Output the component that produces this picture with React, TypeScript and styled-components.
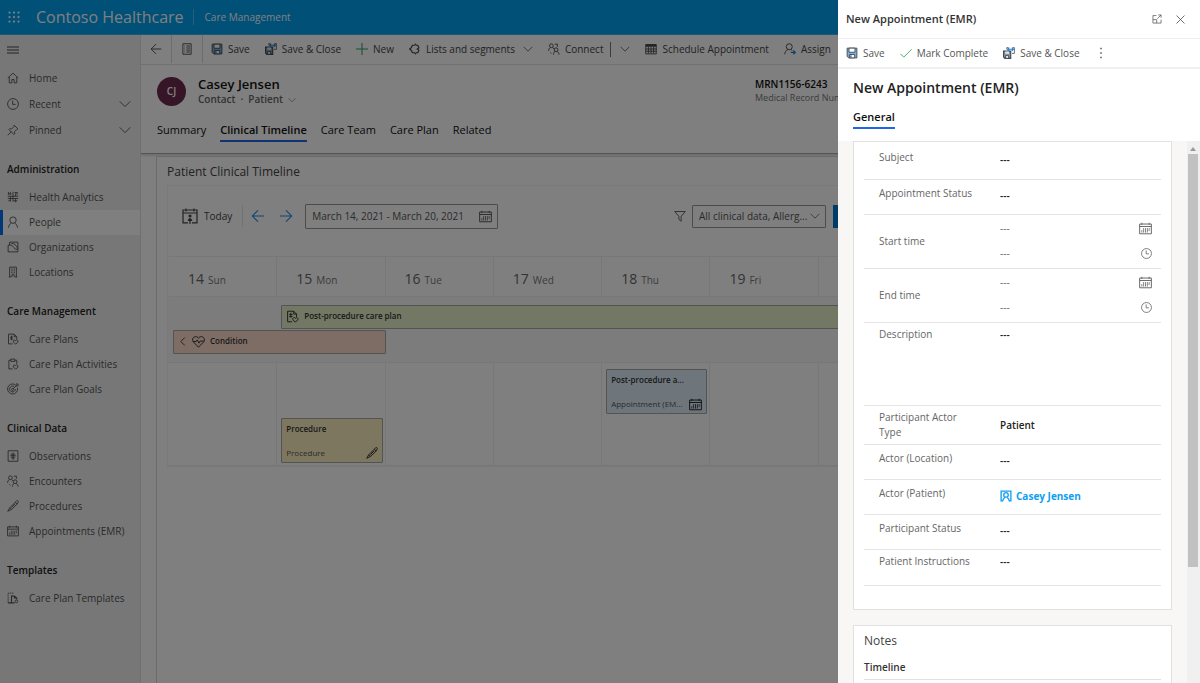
import React from 'react';
import styled, { createGlobalStyle, css } from 'styled-components';

const GlobalStyle = createGlobalStyle`
  * { box-sizing: border-box; }
  body {
    margin: 0;
    background: #ffffff;
    color: #333333;
    font-family: 'Open Sans', 'Noto Sans', sans-serif;
    font-size: 10px;
    line-height: 16px;
  }
  button, input, select, textarea { font: inherit; color: inherit; }
  h1, h2, h3, p, ul { margin: 0; padding: 0; font-size: inherit; font-weight: 400; }
  a { color: inherit; text-decoration: none; }
`;

/* ---------- icons ---------- */

const Svg = styled.svg<{ $size: number }>`
  width: ${(p) => p.$size}px;
  height: ${(p) => p.$size}px;
  flex: none;
  display: block;
  fill: none;
  stroke: currentColor;
  stroke-width: 1.2;
`;

const shapes: Record<string, React.ReactNode> = {
  menu: <path d="M0 4h16M0 8h16M0 12h16" />,
  home: <path d="M1 8l7-6.500L15 8M3 6.500v8h3.500V10h3v4.500H13v-8" />,
  clock: (
    <>
      <circle cx="8" cy="8" r="7.200" />
      <path d="M7.500 3.500v5h4" />
    </>
  ),
  pin: <path d="M1 15l5-5M9.500 1.500l5 5-1.500.800-3 3 .200 2.700-1 1-6.700-6.700 1-1 2.700.200 3-3z" />,
  chevronDown: <path d="M1 4.500L8 11.500l7-7" />,
  chevronLeft: <path d="M12 1L5 8l7 7" strokeWidth="1.600" />,
  analytics: (
    <>
      <path d="M1 7h14M1 10h14M4.500 7v7M8 1v13M11.500 3v4M11.500 10v5" />
      <path d="M1 4h5M2 1.500v3M4.500 1.500v3M10 2h4M13.500 2v3M2 13h3M8.500 13h5" />
    </>
  ),
  person: (
    <>
      <circle cx="8" cy="5.500" r="4.300" />
      <path d="M2 15.500c.300-3.500 2-5 3.800-6M14 15.500c-.300-3.500-2-5-3.800-6" />
    </>
  ),
  organization: (
    <>
      <path d="M1.500 5.500v9h13V1.500h-11v4M1.500 5.500h4.500l3 3 2 2.500h3.500" />
      <path d="M6 3.500h3l3 2.500 2.500 4" />
    </>
  ),
  building: (
    <>
      <path d="M3.500 15V1.500h9V15M2.500 14.500h3.500M10 14.500h3.500M6.500 14.500v-3h3v3" />
      <path d="M5.500 4h2M8.700 4h2M5.500 6.500h2M8.700 6.500h2M5.500 9h2M8.700 9h2" />
    </>
  ),
  carePlan: (
    <>
      <path d="M7.500 14.500H2v-13h7.500L13 5v3.500" />
      <path d="M9.500 1.500V5H13M4 5.500h4M4 8h4M6 3.500v6" />
      <path d="M11.500 15l-3-3a1.700 1.700 0 0 1 3-1.800 1.700 1.700 0 0 1 3 1.800z" />
    </>
  ),
  activities: (
    <>
      <path d="M7.500 14.500h-5V3h2.500M10.500 3H13v5M5 1.500h5.500v3H5z" />
      <path d="M11.500 15l-3-3a1.700 1.700 0 0 1 3-1.800 1.700 1.700 0 0 1 3 1.800z" />
    </>
  ),
  goals: (
    <>
      <path d="M10.500 2A6.700 6.700 0 1 0 14 6.500" />
      <path d="M9.500 4.700A3.900 3.900 0 1 0 11.300 8" />
      <circle cx="7.500" cy="8.500" r="1.300" />
      <path d="M8 8l4-4M12 4V1.500l2.500-.500M12 4h2.500l.5-2.500" />
    </>
  ),
  observations: (
    <>
      <path d="M1.500 1h13v14h-13z" />
      <path d="M8 3.500v9M5 5.500h6M4.500 7.500h7M5 9.500h6M6.500 11.500h3" />
    </>
  ),
  encounters: (
    <>
      <circle cx="4.500" cy="3.700" r="2.500" />
      <path d="M.800 10.500c0-2.500 1.200-3.800 2.400-4.400M8 8c-.300-1-1-1.600-1.800-2" />
      <circle cx="10.800" cy="9" r="2.500" />
      <path d="M7.200 15.500c.200-2.500 1.200-3.700 2.400-4.400M14.700 15.500c-.200-2.500-1.400-3.700-2.600-4.400" />
      <path d="M9 1.500h3.500V5M3 12.500l1.500 1.500" />
    </>
  ),
  scalpel: (
    <>
      <path d="M1 15l2.500-4.500L11 3l2.500 2.500-7.500 7z" />
      <path d="M11 3l2-2.200c1.500-.500 2.500.700 1.900 2L13.500 5.500M4 10.500l2 2M6 10l5-5" />
    </>
  ),
  calendar: (
    <>
      <path d="M.800 2.500h14.400v12H.800zM.800 5.500h14.400M3.500 1v2.500M12.500 1v2.500" />
      <path d="M3.500 10v3M5.700 7.500V13M8 7.500V13M10.300 7.500V13M12.500 7.500V11" strokeWidth="1" />
    </>
  ),
  template: (
    <>
      <path d="M1.500 14.500v-13h8" strokeDasharray="2 1" />
      <path d="M1.500 14.500h4M10 5.500H6v9h4M10 5.500L13 8v2M10 5.500V8h3" strokeWidth="1.500" />
      <circle cx="12.500" cy="12.500" r="1.800" />
    </>
  ),
  back: <path d="M15 8H1.500M8 1.500L1.500 8 8 14.500" />,
  forward: <path d="M1 8h13.500M8 1.500L14.500 8 8 14.500" />,
  form: (
    <>
      <path d="M2.500 1h11v14h-11z" />
      <path d="M4.500 4h1M7 4h5M4.500 6.700h1M7 6.700h5M4.500 9.400h1M7 9.400h5M4.500 12h1M7 12h5" />
    </>
  ),
  save: (
    <>
      <path d="M1.500 1.500h13v13h-11l-2-2z" fill="#7fb2dc" stroke="#3f4750" />
      <path d="M4 1.500h8v5.500H4z" fill="#ffffff" stroke="#3f4750" />
      <path d="M4.500 10h7v4.500h-7z" fill="#ffffff" stroke="#3f4750" />
      <path d="M6.500 11v3" stroke="#3f4750" strokeWidth="1.6" />
    </>
  ),
  saveClose: (
    <>
      <path d="M.800 5.500h9.500v9.700H2.500L.800 13.500z" fill="#8a96a0" stroke="#3f4750" strokeWidth="1.500" />
      <path d="M3 6h5v3H3z" fill="#dfe6ec" stroke="none" />
      <path d="M3.500 11.500h4V15h-4z" fill="#ffffff" stroke="#3f4750" />
      <path d="M5 3V.800h2M13 .800h2.200V8.500H12" stroke="#59636d" />
      <path d="M6 3h8M8.200.800L6 3l2.200 2.200M11.800.800L14 3l-2.200 2.200" stroke="#1f7fd0" strokeWidth="1.400" />
    </>
  ),
  plus: <path d="M8 0v16M0 8h16" stroke="#2f9e5f" strokeWidth="1.400" />,
  check: <path d="M.500 9l4.500 4.500L15.500 3" stroke="#3fae6e" strokeWidth="1.300" />,
  segments: (
    <>
      <path d="M7.500 3H4.500L3.300 6 1 8l2.300 2 1.200 3h3M9.500 3h2.200l1.500 3.500L11 8l2.200 1.500-1.500 3.500H9.500" strokeWidth="1.600" />
      <path d="M7.500 3.500L8.500 1l1 2.500M7.500 12.500l1 2.500 1-2.500" strokeWidth="1.300" />
    </>
  ),
  calendarGrid: (
    <>
      <path d="M1 2h14v12.500H1z" />
      <path d="M1 3.500h14" strokeWidth="3" />
      <path d="M1 8h14M1 11h14M4.500 5v9M8 5v9M11.500 5v9" />
    </>
  ),
  assign: (
    <>
      <circle cx="7" cy="5" r="4" />
      <path d="M1 15c.300-3.500 2-5.200 4-6.200M9.500 8.800l1.500 1" />
      <path d="M9 12.500h6M12.500 10l2.500 2.500-2.500 2.500" stroke="#1f7fd0" strokeWidth="1.500" />
    </>
  ),
  today: (
    <>
      <path d="M6 14.800H1V2h14v12.800h-5M1 5h14M4 .500V3.500M12 .500V3.500" />
      <path d="M8 16v-5M6 12.500l2-2 2 2M7.200 7.300h1.600v1.400H7.200z" />
    </>
  ),
  filter: <path d="M1 2h14L9.500 8.500V15L6.500 12.500v-4z" />,
  heart: (
    <>
      <path d="M8 15L1.500 8.300C-.500 5.500 1.500 2 4.500 2 6.300 2 7.400 3 8 4c.600-1 1.700-2 3.500-2 3 0 5 3.500 3 6.300z" />
      <path d="M1.500 8h3.500l1.500-2 2 4 1.500-2.500h4.500" />
    </>
  ),
  popout: <path d="M7 2.500H1.500v12h13V9M10 1.500h4.500V6M14.500 1.500L8.500 7.500M1.500 9h6v5.500" />,
  close: <path d="M1 1l14 14M15 1L1 15" strokeWidth="1.500" />,
  more: <path d="M8 1v2M8 7v2M8 13v2" strokeWidth="2" />,
  contact: (
    <>
      <path d="M4 14.500H1.500v-13h13v13H12" strokeWidth="1.800" />
      <circle cx="8" cy="6.500" r="3" strokeWidth="1.800" />
      <path d="M3.500 15c.500-3 2-4.500 3-5M12.500 15c-.500-3-2-4.500-3-5" strokeWidth="1.800" />
    </>
  ),
  waffle: (
    <>
      {[2, 8, 14].map((y) =>
        [2, 8, 14].map((x) => <circle key={`${x}-${y}`} cx={x} cy={y} r="1.500" fill="currentColor" stroke="none" />),
      )}
    </>
  ),
};

const Icon = ({ name, size = 12 }: { name: string; size?: number }) => (
  <Svg viewBox="0 0 16 16" $size={size} aria-hidden="true">
    {shapes[name]}
  </Svg>
);

/* ---------- shell ---------- */

const Page = styled.div`
  display: flex;
  flex-direction: column;
  min-height: 100vh;
  overflow: hidden;
`;

const TopBar = styled.header`
  display: flex;
  align-items: center;
  height: 35px;
  flex: none;
  padding-left: 8px;
  background: #00a0f0;
  border-bottom: 1px solid #38b0f4;
  color: #ffffff;
`;

const PlainButton = styled.button`
  display: flex;
  align-items: center;
  padding: 0;
  border: 0;
  background: none;
  white-space: nowrap;
  cursor: pointer;
`;

const Brand = styled.span`
  margin-left: 16px;
  padding-right: 9px;
  border-right: 1px solid #4cc0fa;
  font-size: 16px;
`;

const AppName = styled.span`
  margin-left: 11px;
`;

const Body = styled.div`
  display: flex;
  flex: 1;
`;

const Sidebar = styled.nav`
  width: 141px;
  flex: none;
  background: #efefef;
  border-right: 1px solid #e0e0e0;
`;

const MenuButton = styled(PlainButton)`
  height: 30px;
  padding-left: 7px;
`;

const NavList = styled.ul<{ $tall?: boolean }>`
  list-style: none;
  & > li { height: ${(p) => (p.$tall ? 26 : 25)}px; }
`;

const NavHeading = styled.h2`
  padding: 11px 0 1px 7px;
  font-weight: 600;
  line-height: 30px;
  color: #222222;
`;

const NavLink = styled.a<{ $active?: boolean }>`
  display: flex;
  align-items: center;
  gap: 10px;
  height: 100%;
  padding: 0 9px 1px 7px;
  color: #555555;
  ${(p) =>
    p.$active &&
    css`
      background: #ffffff;
      box-shadow: inset 3px 0 0 #0070f0;
    `}
  & > span { flex: 1; }
`;

/* ---------- record page ---------- */

const Main = styled.main`
  display: flex;
  flex-direction: column;
  flex: 1;
  min-width: 0;
  background: #ffffff;
`;

const CommandBar = styled.div`
  display: flex;
  align-items: center;
  height: 30px;
  padding-bottom: 1px;
  border-bottom: 1px solid #e2e2e2;
  color: #444444;
`;

const SquareCommand = styled(PlainButton)`
  justify-content: center;
  width: 31px;
  height: 28px;
  border-right: 1px solid #d8d8d8;
`;

const Command = styled(PlainButton)`
  gap: 5px;
  margin-left: 8px;
  padding-right: 7px;
`;

const MenuCommand = styled(Command)`
  margin-left: 1px;
`;

const SplitMark = styled.span`
  width: 1px;
  height: 15px;
  margin-right: 8px;
  background: #777777;
`;

const RecordHeader = styled.section`
  padding: 11px 0 0 16px;
  height: 89px;
  border-bottom: 1px solid #aaaaaa;
  box-shadow: 0 2px 2px #dddddd;
`;

const RecordSummary = styled.div`
  display: grid;
  grid-template-columns: 4fr 3fr;
  align-items: center;
`;

const Identity = styled.div`
  display: flex;
  align-items: center;
  gap: 12px;
`;

const Avatar = styled.span`
  display: grid;
  place-items: center;
  width: 29px;
  height: 29px;
  border-radius: 50%;
  background: #6c2b4f;
  color: #ffffff;
  font-weight: 600;
`;

const RecordName = styled.h1`
  font-size: 13px;
  font-weight: 600;
  line-height: 17px;
  color: #111111;
`;

const RecordMeta = styled.p`
  display: flex;
  align-items: center;
  gap: 5px;
  line-height: 13px;
  font-weight: 600;
  color: #666666;
`;

const Fact = styled.div`
  padding-left: 2px;
  line-height: 13px;
  color: #111111;
  font-weight: 600;
  & > small {
    display: block;
    font-size: 9px;
    font-weight: 400;
    color: #777777;
  }
`;

const Tabs = styled.div`
  display: flex;
  gap: 14px;
  margin-top: 14px;
`;

const Tab = styled.button<{ $active?: boolean }>`
  height: 22px;
  padding: 0 0 1px;
  border: 0;
  border-bottom: 2px solid ${(p) => (p.$active ? '#2266e3' : 'transparent')};
  background: none;
  font-size: 11px;
  font-weight: ${(p) => (p.$active ? 600 : 400)};
  color: #111111;
  cursor: pointer;
`;

const Columns = styled.div`
  display: grid;
  grid-template-columns: 3fr 1fr;
  flex: 1;
  padding: 2px 0 0 15px;
`;

const Section = styled.section`
  padding: 6px 10px 0;
  border: 1px solid #d6d6d6;
  border-bottom: 0;
`;

const SectionTitle = styled.h2`
  font-size: 12px;
  line-height: 18px;
  color: #444444;
`;

const Timeline = styled.div`
  margin-top: 4px;
  border: 1px solid #f2f2f2;
`;

const TimelineTools = styled.div`
  display: flex;
  align-items: center;
  height: 60px;
  margin-bottom: 10px;
  padding: 0 14px;
  color: #555555;
`;

const TodayButton = styled(PlainButton)`
  gap: 6px;
  height: 22px;
  padding-right: 10px;
  border-right: 1px solid #e2e2e2;
  color: #444444;
`;

const ArrowButton = styled(PlainButton)`
  margin-left: 8px;
  padding-right: 6px;
  color: #1f86dc;
`;

const DateRange = styled.label`
  display: flex;
  align-items: center;
  width: 193px;
  height: 25px;
  margin-left: 6px;
  padding: 0 5px 0 6px;
  border: 1px solid #999999;
  border-radius: 1px;
  & > input {
    flex: 1;
    min-width: 0;
    padding: 0;
    border: 0;
    background: none;
  }
`;

const FilterMark = styled.span`
  margin: 0 6px 0 auto;
`;

const SelectBox = styled.span`
  display: grid;
  grid-template-columns: 1fr 10px;
  align-items: center;
  width: 134px;
  height: 23px;
  padding: 0 5px 0 6px;
  border: 1px solid #999999;
  border-radius: 1px;
  & > select {
    width: 100%;
    padding: 0;
    border: 0;
    background: none;
    appearance: none;
  }
`;

const PrimaryButton = styled(PlainButton)`
  justify-content: center;
  width: 80px;
  height: 23px;
  margin-left: 7px;
  background: #0078d4;
  color: #ffffff;
`;

const WeekRow = styled.div`
  display: grid;
  grid-template-columns: repeat(7, minmax(0, 1fr));
  padding-left: 1px;
`;

const DayHead = styled.div`
  display: flex;
  align-items: baseline;
  gap: 4px;
  height: 41px;
  padding: 12px 0 0 19px;
  border: solid #eeeeee;
  border-width: 1px 1px 1px 0;
  line-height: 20px;
  color: #777777;
  & > strong { font-size: 14px; font-weight: 400; color: #666666; }
`;

const AllDay = styled(WeekRow)`
  row-gap: 1px;
  padding-top: 8px;
  padding-bottom: 8px;
  background: #f9f9f9;
  border-bottom: 1px solid #eeeeee;
`;

const Bar = styled.button<{ $span: string; $tone: string }>`
  display: flex;
  align-items: center;
  gap: 5px;
  grid-column: ${(p) => p.$span};
  height: 24px;
  margin-left: 4px;
  padding: 0 4px 2px;
  border: 1px solid #a6a6a6;
  border-radius: 1px;
  background: ${(p) => p.$tone};
  font-size: 8px;
  font-weight: 600;
  color: #333333;
`;

const DayCell = styled.div<{ $end?: boolean }>`
  display: flex;
  align-items: ${(p) => (p.$end ? 'flex-end' : 'flex-start')};
  height: 103px;
  padding: 6px 2px 2px 4px;
  border: solid #eeeeee;
  border-width: 0 1px 1px 0;
`;

const EventCard = styled.button<{ $tone: string }>`
  display: flex;
  flex-direction: column;
  justify-content: space-between;
  width: 100%;
  height: 45px;
  padding: 2px 4px 1px;
  border: 1px solid #a6a6a6;
  border-radius: 1px;
  background: ${(p) => p.$tone};
  font-size: 8px;
  text-align: left;
  color: #333333;
  & > strong { font-weight: 600; }
  & > span {
    display: flex;
    align-items: center;
    justify-content: space-between;
    width: 100%;
    color: #555555;
  }
  & svg { color: #222222; }
`;

/* ---------- drawer ---------- */

const Scrim = styled.div`
  position: fixed;
  inset: 0;
  background: rgba(0, 0, 0, 0.5);
`;

const Drawer = styled.aside`
  position: fixed;
  top: 0;
  right: 0;
  bottom: 0;
  display: flex;
  flex-direction: column;
  width: 362px;
  background: #ffffff;
`;

const DrawerTop = styled.div`
  display: flex;
  align-items: center;
  height: 39px;
  flex: none;
  gap: 14px;
  padding: 0 15px 0 8px;
  border-bottom: 1px solid #eeeeee;
  color: #555555;
  & > h2 {
    flex: 1;
    font-size: 11px;
    font-weight: 600;
    color: #333333;
  }
`;

const DrawerCommands = styled.div`
  display: flex;
  align-items: center;
  height: 30px;
  flex: none;
  border-bottom: 2px solid #f0f0f0;
  color: #555555;
`;

const DrawerHeader = styled.div`
  flex: none;
  height: 72px;
  padding: 9px 15px 0;
  & > h1 {
    font-size: 14px;
    font-weight: 600;
    line-height: 20px;
    color: #222222;
  }
`;

const GeneralTab = styled(Tab)`
  margin-top: 9px;
`;

const DrawerBody = styled.div`
  display: flex;
  flex: 1;
  min-height: 0;
  background: #f8f7f6;
`;

const Cards = styled.div`
  flex: 1;
  min-width: 0;
  overflow: hidden;
  padding: 0 15px;
`;

const Card = styled.section`
  margin-bottom: 15px;
  padding: 0 10px 23px;
  border: 1px solid #e1e1e1;
  background: #ffffff;
`;

const Field = styled.div<{ $height: number; $top?: number; $middle?: boolean }>`
  display: grid;
  grid-template-columns: 121px 1fr;
  align-items: ${(p) => (p.$middle ? 'center' : 'start')};
  height: ${(p) => p.$height}px;
  padding: ${(p) => p.$top ?? 6}px 8px 0 15px;
  border-bottom: 1px solid #e4e4e4;
  color: #666666;
  & > label { line-height: 15px; padding-right: 20px; }
`;

const ValueInput = styled.input`
  width: 100%;
  height: 20px;
  padding: 0;
  border: 0;
  background: none;
  font-weight: 600;
  color: #222222;
`;

const ValueArea = styled.textarea`
  width: 100%;
  height: 20px;
  padding: 0;
  border: 0;
  background: none;
  resize: none;
  overflow: hidden;
  font-weight: 600;
  color: #222222;
`;

const TimeField = styled.fieldset`
  display: grid;
  grid-template-columns: 121px 1fr;
  align-items: center;
  height: 54px;
  margin: 0;
  padding: 0 9px 2px 15px;
  border: 0;
  border-bottom: 1px solid #e4e4e4;
  color: #666666;
`;

const TimeLine = styled.label`
  display: flex;
  align-items: center;
  height: 25px;
  & > input {
    flex: 1;
    min-width: 0;
    padding: 0;
    border: 0;
    background: none;
  }
`;

const PersonLink = styled.a`
  display: flex;
  align-items: center;
  gap: 4px;
  height: 20px;
  font-weight: 700;
  color: #10a0f0;
`;

const NotesCard = styled(Card)`
  padding-top: 6px;
  & > h2 { font-size: 12px; line-height: 18px; color: #444444; }
  & > h3 {
    padding: 9px 0 4px;
    border-bottom: 1px solid #e1e1e1;
    font-weight: 600;
    color: #333333;
  }
`;

const ScrollTrack = styled.div`
  width: 13px;
  padding: 6px 2px 0 1px;
  background: #f0f0f0;
`;

const ScrollArrow = styled.div`
  width: 0;
  height: 4px;
  margin: 0 auto 3px;
  border: solid transparent;
  border-width: 0 3px 4px;
  border-bottom-color: #999999;
`;

const ScrollThumb = styled.div`
  height: 77%;
  background: #c1c1c1;
`;

/* ---------- data ---------- */

const quickLinks = [
  { icon: 'home', label: 'Home', expands: false },
  { icon: 'clock', label: 'Recent', expands: true },
  { icon: 'pin', label: 'Pinned', expands: true },
];

const navGroups: { title: string; items: [string, string][] }[] = [
  {
    title: 'Administration',
    items: [
      ['analytics', 'Health Analytics'],
      ['person', 'People'],
      ['organization', 'Organizations'],
      ['building', 'Locations'],
    ],
  },
  {
    title: 'Care Management',
    items: [
      ['carePlan', 'Care Plans'],
      ['activities', 'Care Plan Activities'],
      ['goals', 'Care Plan Goals'],
    ],
  },
  {
    title: 'Clinical Data',
    items: [
      ['observations', 'Observations'],
      ['encounters', 'Encounters'],
      ['scalpel', 'Procedures'],
      ['calendar', 'Appointments (EMR)'],
    ],
  },
  { title: 'Templates', items: [['template', 'Care Plan Templates']] },
];

const days: [string, string][] = [
  ['14', 'Sun'],
  ['15', 'Mon'],
  ['16', 'Tue'],
  ['17', 'Wed'],
  ['18', 'Thu'],
  ['19', 'Fri'],
  ['20', 'Sat'],
];

const recordTabs = ['Summary', 'Clinical Timeline', 'Care Team', 'Care Plan', 'Related'];

type TextFieldProps = {
  id: string;
  label: string;
  height: number;
  top?: number;
  middle?: boolean;
  value?: string;
};

const TextField = ({ id, label, height, top, middle, value = '---' }: TextFieldProps) => (
  <Field $height={height} $top={top} $middle={middle}>
    <label htmlFor={id}>{label}</label>
    <ValueInput id={id} defaultValue={value} />
  </Field>
);

const DateTimeField = ({ label }: { label: string }) => (
  <TimeField aria-label={label}>
    <span>{label}</span>
    <div>
      <TimeLine>
        <input aria-label={`${label} date`} defaultValue="---" />
        <Icon name="calendar" size={13} />
      </TimeLine>
      <TimeLine>
        <input aria-label={`${label} hour`} defaultValue="---" />
        <Icon name="clock" size={11} />
      </TimeLine>
    </div>
  </TimeField>
);

export default function App() {
  return (
    <>
      <GlobalStyle />
      <Page>
        <TopBar>
          <PlainButton aria-label="Apps">
            <Icon name="waffle" />
          </PlainButton>
          <Brand>Contoso Healthcare</Brand>
          <AppName>Care Management</AppName>
        </TopBar>
        <Body>
          <Sidebar>
            <MenuButton aria-label="Toggle navigation">
              <Icon name="menu" />
            </MenuButton>
            <NavList $tall>
              {quickLinks.map((item) => (
                <li key={item.label}>
                  <NavLink href="#">
                    <Icon name={item.icon} />
                    <span>{item.label}</span>
                    {item.expands && <Icon name="chevronDown" />}
                  </NavLink>
                </li>
              ))}
            </NavList>
            {navGroups.map((group) => (
              <section key={group.title}>
                <NavHeading>{group.title}</NavHeading>
                <NavList>
                  {group.items.map(([icon, label]) => (
                    <li key={label}>
                      <NavLink href="#" $active={label === 'People'}>
                        <Icon name={icon} />
                        <span>{label}</span>
                      </NavLink>
                    </li>
                  ))}
                </NavList>
              </section>
            ))}
          </Sidebar>

          <Main>
            <CommandBar>
              <SquareCommand aria-label="Back">
                <Icon name="back" />
              </SquareCommand>
              <SquareCommand aria-label="Open form">
                <Icon name="form" />
              </SquareCommand>
              <Command><Icon name="save" />Save</Command>
              <Command><Icon name="saveClose" />Save &amp; Close</Command>
              <Command><Icon name="plus" />New</Command>
              <Command><Icon name="segments" />Lists and segments</Command>
              <MenuCommand aria-label="More lists"><Icon name="chevronDown" size={10} /></MenuCommand>
              <Command><Icon name="encounters" />Connect</Command>
              <SplitMark />
              <MenuCommand aria-label="More connect options"><Icon name="chevronDown" size={10} /></MenuCommand>
              <Command><Icon name="calendarGrid" />Schedule Appointment</Command>
              <Command><Icon name="assign" />Assign</Command>
            </CommandBar>

            <RecordHeader>
              <RecordSummary>
                <Identity>
                  <Avatar>CJ</Avatar>
                  <div>
                    <RecordName>Casey Jensen</RecordName>
                    <RecordMeta>
                      <span>Contact</span>
                      <span>·</span>
                      <span>Patient</span>
                      <Icon name="chevronDown" size={8} />
                    </RecordMeta>
                  </div>
                </Identity>
                <Fact>
                  MRN1156-6243
                  <small>Medical Record Number</small>
                </Fact>
              </RecordSummary>
              <Tabs role="tablist">
                {recordTabs.map((tab) => (
                  <Tab key={tab} role="tab" $active={tab === 'Clinical Timeline'}>
                    {tab}
                  </Tab>
                ))}
              </Tabs>
            </RecordHeader>

            <Columns>
              <Section>
                <SectionTitle>Patient Clinical Timeline</SectionTitle>
                <Timeline>
                  <TimelineTools>
                    <TodayButton><Icon name="today" size={16} />Today</TodayButton>
                    <ArrowButton aria-label="Previous week"><Icon name="back" size={14} /></ArrowButton>
                    <ArrowButton aria-label="Next week"><Icon name="forward" size={14} /></ArrowButton>
                    <DateRange>
                      <input aria-label="Date range" defaultValue="March 14, 2021 - March 20, 2021" />
                      <Icon name="calendar" size={13} />
                    </DateRange>
                    <FilterMark><Icon name="filter" /></FilterMark>
                    <SelectBox>
                      <select aria-label="Clinical data filter">
                        <option>All clinical data, Allerg...</option>
                      </select>
                      <Icon name="chevronDown" size={10} />
                    </SelectBox>
                    <PrimaryButton aria-label="Add" />
                  </TimelineTools>
                  <WeekRow>
                    {days.map(([date, name]) => (
                      <DayHead key={date}>
                        <strong>{date}</strong>
                        {name}
                      </DayHead>
                    ))}
                  </WeekRow>
                  <AllDay>
                    <Bar $span="2 / 8" $tone="#e6f0c8">
                      <Icon name="carePlan" size={13} />
                      Post-procedure care plan
                    </Bar>
                    <Bar $span="1 / 3" $tone="#fddacb">
                      <Icon name="chevronLeft" size={9} />
                      <Icon name="heart" size={13} />
                      Condition
                    </Bar>
                  </AllDay>
                  <WeekRow>
                    {days.map(([date]) => (
                      <DayCell key={date} $end={date === '15'}>
                        {date === '15' && (
                          <EventCard $tone="#fbeec0">
                            <strong>Procedure</strong>
                            <span>Procedure<Icon name="scalpel" /></span>
                          </EventCard>
                        )}
                        {date === '18' && (
                          <EventCard $tone="#dcecf8">
                            <strong>Post-procedure a...</strong>
                            <span>Appointment (EM...<Icon name="calendar" size={13} /></span>
                          </EventCard>
                        )}
                      </DayCell>
                    ))}
                  </WeekRow>
                </Timeline>
              </Section>
            </Columns>
          </Main>
        </Body>
      </Page>

      <Scrim />

      <Drawer role="dialog" aria-label="New Appointment (EMR)">
        <DrawerTop>
          <h2>New Appointment (EMR)</h2>
          <PlainButton aria-label="Open in new window"><Icon name="popout" size={10} /></PlainButton>
          <PlainButton aria-label="Close"><Icon name="close" size={9} /></PlainButton>
        </DrawerTop>
        <DrawerCommands>
          <Command><Icon name="save" />Save</Command>
          <Command><Icon name="check" />Mark Complete</Command>
          <Command><Icon name="saveClose" />Save &amp; Close</Command>
          <Command aria-label="More commands"><Icon name="more" /></Command>
        </DrawerCommands>
        <DrawerHeader>
          <h1>New Appointment (EMR)</h1>
          <GeneralTab role="tab" $active>General</GeneralTab>
        </DrawerHeader>
        <DrawerBody>
          <Cards>
            <Card>
              <TextField id="subject" label="Subject" height={38} top={8} />
              <TextField id="status" label="Appointment Status" height={35} />
              <DateTimeField label="Start time" />
              <DateTimeField label="End time" />
              <Field $height={83} $top={4}>
                <label htmlFor="description">Description</label>
                <ValueArea id="description" defaultValue="---" />
              </Field>
              <TextField id="actor-type" label="Participant Actor Type" height={39} top={0} middle value="Patient" />
              <TextField id="actor-location" label="Actor (Location)" height={35} />
              <Field $height={35}>
                <label htmlFor="actor-patient">Actor (Patient)</label>
                <PersonLink id="actor-patient" href="#">
                  <Icon name="contact" />
                  Casey Jensen
                </PersonLink>
              </Field>
              <TextField id="participant-status" label="Participant Status" height={35} />
              <Field $height={36} $top={4}>
                <label htmlFor="instructions">Patient Instructions</label>
                <ValueArea id="instructions" defaultValue="---" />
              </Field>
            </Card>
            <NotesCard>
              <h2>Notes</h2>
              <h3>Timeline</h3>
            </NotesCard>
          </Cards>
          <ScrollTrack aria-hidden="true">
            <ScrollArrow />
            <ScrollThumb />
          </ScrollTrack>
        </DrawerBody>
      </Drawer>
    </>
  );
}
